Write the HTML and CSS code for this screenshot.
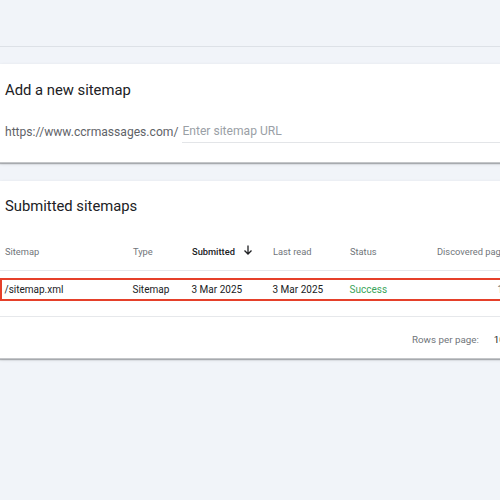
FILE: index.html
```html
<!DOCTYPE html>
<html>
<head>
<meta charset="utf-8">
<link rel="stylesheet" href="styles.css">
</head>
<body>
<div class="topbar"></div>
<main class="main">
  <section class="card add-card">
    <h2 class="card-title">Add a new sitemap</h2>
    <div class="url-row">
      <span class="prefix">https://www.ccrmassages.com/</span>
      <span class="input">Enter sitemap URL</span>
    </div>
  </section>
  <section class="card list-card">
    <h2 class="card-title">Submitted sitemaps</h2>
    <div class="table">
      <div class="row head">
        <span class="c1">Sitemap</span>
        <span class="c2">Type</span>
        <span class="c3 sorted">Submitted
          <svg class="arrow" width="10" height="10" viewBox="0 0 10 10"><path d="M5 0.5V9M1.5 5.5L5 9L8.5 5.5" fill="none" stroke="#202124" stroke-width="1.3"/></svg>
        </span>
        <span class="c4">Last read</span>
        <span class="c5">Status</span>
        <span class="c6">Discovered pages</span>
      </div>
      <div class="row body-row">
        <span class="c1">/sitemap.xml</span>
        <span class="c2">Sitemap</span>
        <span class="c3">3 Mar 2025</span>
        <span class="c4">3 Mar 2025</span>
        <span class="c5 success">Success</span>
        <span class="c6 num">1</span>
      </div>
    </div>
    <div class="footer">
      <span class="rpp">Rows per page:</span>
      <span class="rpp-val">10</span>
    </div>
  </section>
</main>
</body>
</html>
```
FILE: styles.css
```css
html, body {
  margin: 0;
  padding: 0;
}
body {
  width: 500px;
  height: 500px;
  overflow: hidden;
  background: #f1f4f9;
  font-family: Roboto, "Liberation Sans", Arial, sans-serif;
  color: #202124;
}
.topbar {
  height: 46px;
  border-bottom: 1px solid #dde1e7;
}
.main {
  padding-top: 17px;
  display: flex;
  flex-direction: column;
  gap: 18px;
}
.card {
  width: 540px;
  background: #fff;
  box-shadow: 0 1px 1px rgba(60,64,67,0.35), 0 1px 3px 0 rgba(60,64,67,0.15);
  border-bottom: 1px solid #c4c6c9;
  box-sizing: border-box;
}
.add-card {
  height: 99px;
  padding-top: 17px;
}
.card-title {
  margin: 0;
  padding-left: 5px;
  font-size: 14.8px;
  font-weight: 400;
  line-height: 18px;
  color: #202124;
}
.url-row {
  display: flex;
  align-items: flex-end;
  margin-top: 20px;
  padding-left: 5px;
  font-size: 12.1px;
}
.prefix {
  color: #5f6368;
  line-height: 20px;
  padding-bottom: 1px;
}
.input {
  flex: 1;
  margin-left: 4px;
  color: #9aa0a6;
  line-height: 20px;
  border-bottom: 1px solid #e3e5e8;
  padding-top: 2px;
  padding-bottom: 1px;
}
.list-card {
  height: 178px;
  padding-top: 16px;
}
.table {
  margin-top: 26px;
  font-size: 9.3px;
}
.row {
  display: flex;
  align-items: center;
}
.head {
  height: 20px;
  padding-bottom: 9px;
  color: #70757a;
  border-bottom: 1px solid #e6e8eb;
}
.body-row {
  height: 23px;
  margin-top: 7px;
  border: 2.5px solid #e5402a;
  border-right: none;
  box-sizing: border-box;
  font-size: 10px;
  color: #202124;
}
.c1 { width: 133px; padding-left: 5px; box-sizing: border-box; flex: none; }
.body-row .c1 { width: 130.5px; padding-left: 2.5px; }
.c2 { width: 59px; flex: none; }
.c3 { width: 81px; flex: none; display: flex; align-items: center; }
.c4 { width: 77px; flex: none; }
.c5 { width: 87px; flex: none; }
.c6 { flex: none; white-space: nowrap; }
.sorted { color: #202124; font-weight: 500; }
.arrow { margin-left: 8px; margin-top: -3px; }
.success { color: #3aa45a; }
.num { margin-left: 61px; color: #5f6368; }
.list-card .table::after {
  content: "";
  display: block;
  height: 15px;
  border-bottom: 1px solid #e6e8eb;
}
.footer {
  display: flex;
  align-items: center;
  height: 20px;
  margin-top: 12px;
  padding-left: 412px;
  font-size: 9.8px;
  color: #70757a;
}
.rpp-val {
  margin-left: 15px;
  color: #202124;
}
```
